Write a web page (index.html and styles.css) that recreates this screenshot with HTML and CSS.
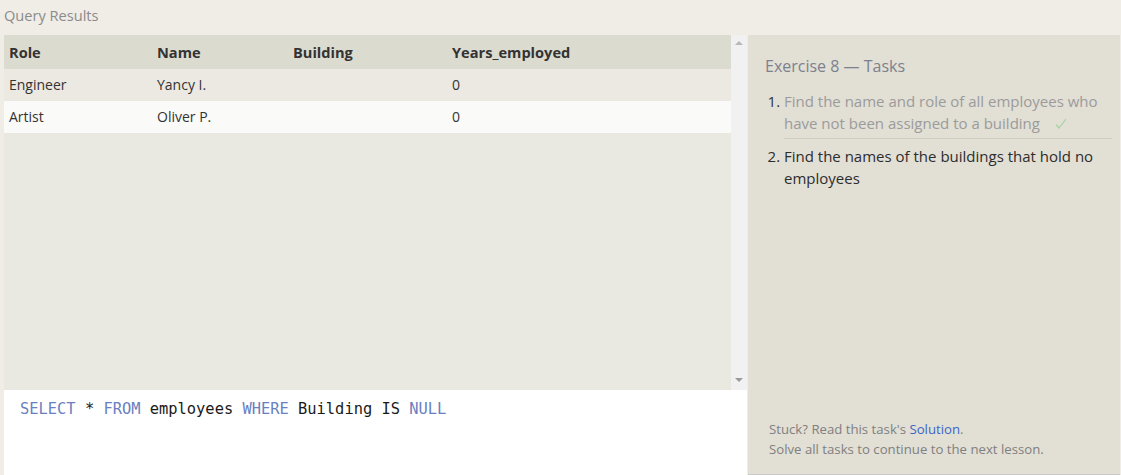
FILE: index.html
```html
<!DOCTYPE html>
<html>
<head>
<meta charset="utf-8">
<link rel="stylesheet" href="styles.css">
</head>
<body>
<div class="title">Query Results</div>
<div class="main">
  <div class="left">
    <div class="results">
      <div class="table-wrap">
        <table class="grid">
          <thead>
            <tr><th class="c-role">Role</th><th class="c-name">Name</th><th class="c-bld">Building</th><th>Years_employed</th></tr>
          </thead>
          <tbody>
            <tr class="odd"><td>Engineer</td><td>Yancy I.</td><td></td><td>0</td></tr>
            <tr class="even"><td>Artist</td><td>Oliver P.</td><td></td><td>0</td></tr>
          </tbody>
        </table>
      </div>
      <div class="scrollbar">
        <span class="arrow up"></span>
        <span class="arrow down"></span>
      </div>
    </div>
    <div class="editor"><span class="kw">SELECT</span> * <span class="kw">FROM</span> employees <span class="kw">WHERE</span> Building IS <span class="kw">NULL</span></div>
  </div>
  <div class="tasks">
    <div class="tasks-title">Exercise 8 — Tasks</div>
    <ol class="task-list">
      <li class="done"><span class="task-text">Find the name and role of all employees who have not been assigned to a building</span><svg class="check" width="12" height="12" viewBox="0 0 12 12" aria-label="done"><polyline points="1,6.5 4,10 11,1" fill="none" stroke="#a6d3a3" stroke-width="1.2"/></svg></li>
      <li class="current"><span class="task-text">Find the names of the buildings that hold no employees</span></li>
    </ol>
    <div class="footer">
      <div>Stuck? Read this task's <a class="link" href="#">Solution</a>.</div>
      <div>Solve all tasks to continue to the next lesson.</div>
    </div>
  </div>
</div>
</body>
</html>
```

FILE: styles.css
```css
html, body {
  margin: 0;
  padding: 0;
}
body {
  background: #f0ede6;
  font-family: "Open Sans", "Noto Sans", sans-serif;
  width: 1121px;
  height: 475px;
  overflow: hidden;
}
.title {
  height: 35px;
  line-height: 30px;
  padding-left: 4px;
  font-size: 14.6px;
  color: #8b8b8b;
}
.main {
  display: flex;
  height: 440px;
}
.left {
  margin-left: 4px;
  width: 743px;
  display: flex;
  flex-direction: column;
}
.results {
  height: 355px;
  display: flex;
  background: #e9e8e1;
}
.table-wrap {
  width: 727px;
}
.grid {
  width: 100%;
  border-collapse: collapse;
  font-size: 14px;
  color: #333;
}
.grid th {
  background: #dcdbd0;
  height: 34px;
  text-align: left;
  font-weight: 700;
  font-size: 14.6px;
  padding: 0 0 0 5px;
  color: #333;
}
.grid td {
  height: 30px;
  padding: 0 0 2px 5px;
}
.c-role { width: 143px; }
.c-name { width: 131px; }
.c-bld { width: 154px; }
.grid tr.odd td { background: #ebe9e2; }
.grid tr.even td { background: #fafaf8; }
.scrollbar {
  width: 16px;
  background: #f1f1f1;
  display: flex;
  flex-direction: column;
  justify-content: space-between;
  align-items: center;
  padding: 6px 0 8px;
}
.arrow {
  width: 0;
  height: 0;
  border-left: 4px solid transparent;
  border-right: 4px solid transparent;
}
.arrow.up { border-bottom: 4px solid #b8b8b8; }
.arrow.down { border-top: 4px solid #9a9a9a; }
.editor {
  flex: 1;
  background: #ffffff;
  padding: 10px 16px 8px;
  font-family: "DejaVu Sans Mono", "Liberation Mono", monospace;
  font-size: 15.4px;
  color: #1a1a1a;
  white-space: pre;
}
.kw { color: #6a7fc0; }
.tasks {
  width: 372px;
  background: #e2dfd5;
  margin-left: 1px;
  padding: 20px 8px 0 20px;
  box-sizing: border-box;
  display: flex;
  flex-direction: column;
  border-bottom: 1px solid #c9c9c9;
}
.tasks-title {
  font-size: 16px;
  line-height: 22px;
  color: #7d818e;
  margin: 0 0 13px -3px;
}
.task-list {
  margin: 0;
  padding: 0 0 0 16px;
  font-size: 15px;
  line-height: 22px;
}
.task-list li {
  padding: 0 0 4px 0;
}
.task-list li.done {
  color: #333;
  border-bottom: 1px solid #d0cdc4;
  margin-bottom: 6px;
}
.task-list li.done .task-text { color: #9b9b9b; }
.task-list li.current { color: #2d2d2d; }
.check {
  margin-left: 15px;
  vertical-align: -1px;
}
.footer {
  margin-top: auto;
  padding-bottom: 15px;
  margin-left: -2px;
  font-size: 13.2px;
  line-height: 20px;
  color: #808080;
  padding-left: 3px;
}
.link { color: #3b65c9; text-decoration: none; }
```
